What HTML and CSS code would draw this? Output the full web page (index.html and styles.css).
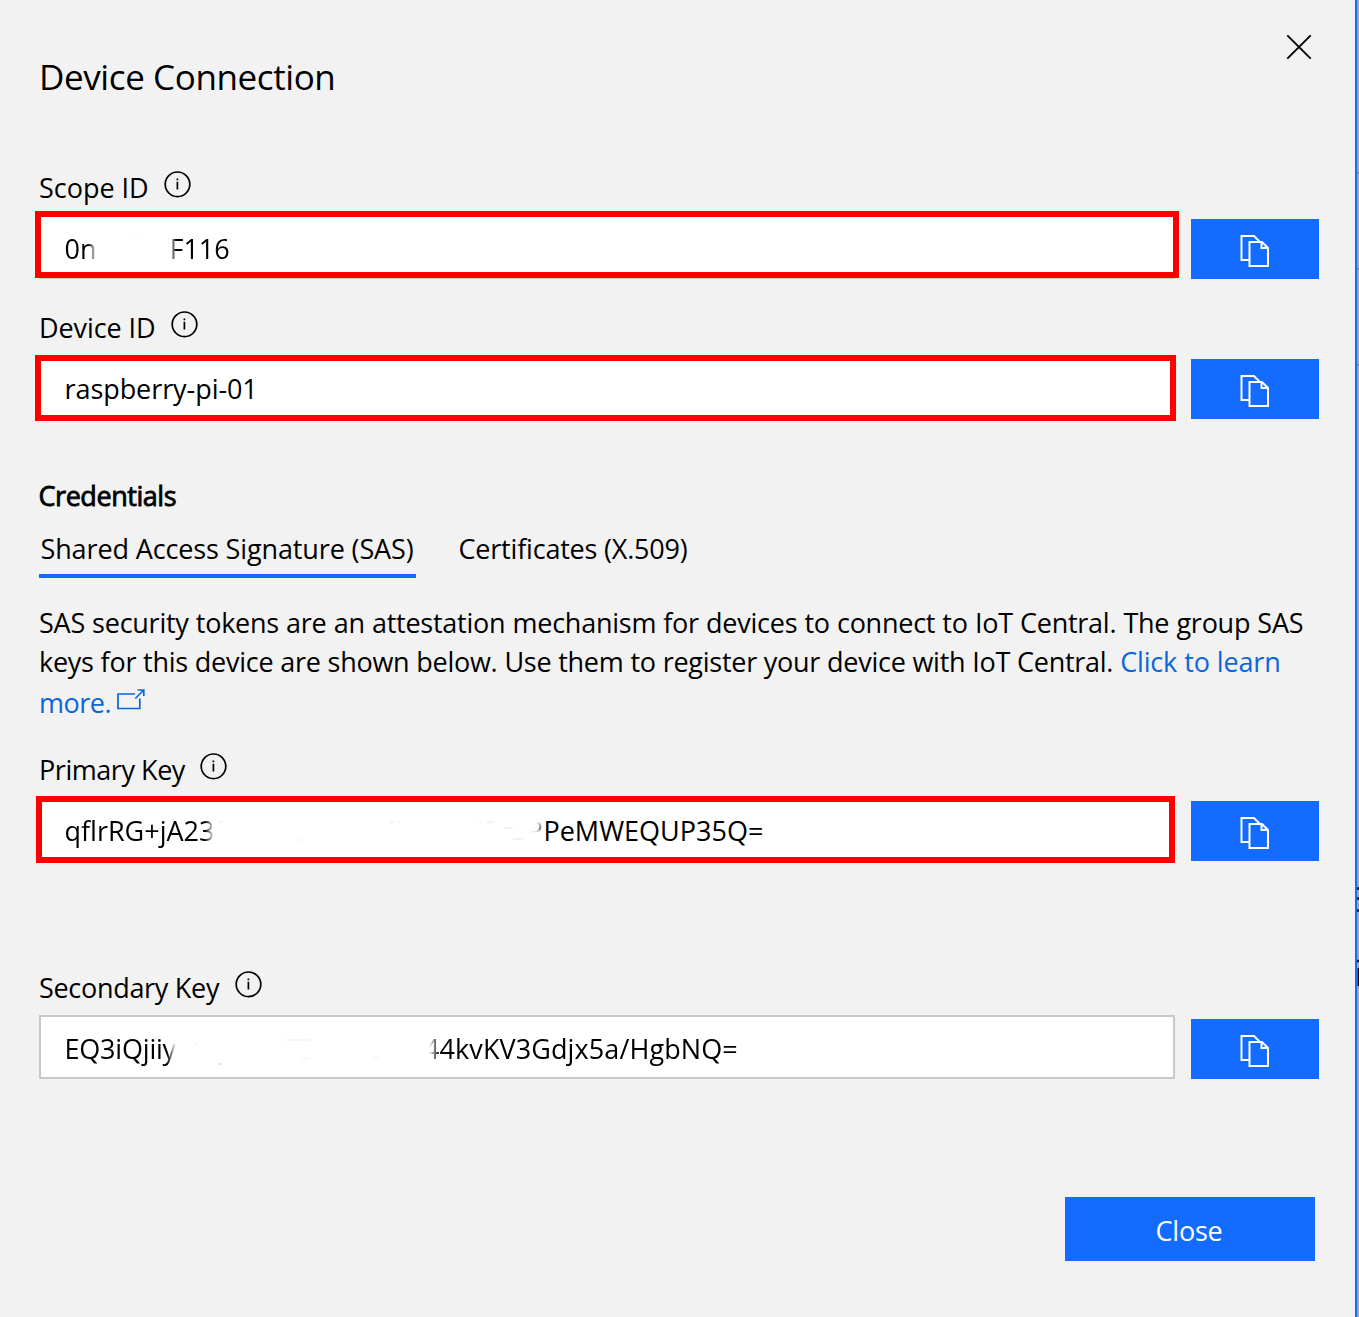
FILE: index.html
```html
<!DOCTYPE html>
<html lang="en">
<head>
<meta charset="utf-8">
<title>Device Connection</title>
<link rel="stylesheet" href="styles.css">
</head>
<body>
<svg class="symbols" aria-hidden="true">
  <symbol id="info" viewBox="0 0 27 27">
    <circle cx="13.5" cy="13.3" r="12.3" fill="none" stroke="currentColor" stroke-width="1.7"/>
    <path d="M13.4 10.8V18.6M13.4 7.4V9.2" fill="none" stroke="currentColor" stroke-width="1.7"/>
  </symbol>
  <symbol id="copy" viewBox="0 0 30 32">
    <path d="M9 25H1.5V1H14L20 7M9.5 7H22L28 13V31H9.5ZM21.5 7V13H28" fill="none" stroke="currentColor" stroke-width="2"/>
  </symbol>
</svg>
<main class="panel">
  <button class="dismiss" aria-label="Dismiss">
    <svg width="26" height="26" viewBox="0 0 26 26"><path d="M1.3 1.3L24.7 24.7M24.7 1.3L1.3 24.7" stroke="currentColor" stroke-width="1.9"/></svg>
  </button>
  <h1 class="title">Device Connection</h1>

  <section class="field">
    <div class="label"><span class="scope-label">Scope ID</span><svg class="info"><use href="#info"/></svg></div>
    <div class="row">
      <div class="input marked scope">
        <span class="fade-end">0n</span>
        <svg class="gap" width="73" height="60" viewBox="95 217 73 60"><path d="M132 239h4M166 239h3" stroke="#f3f3f3"/></svg>
        <span class="fade-start">F116</span>
      </div>
      <button class="copy" aria-label="Copy"><svg><use href="#copy"/></svg></button>
    </div>
  </section>

  <section class="field device">
    <div class="label"><span class="device-label">Device ID</span><svg class="info"><use href="#info"/></svg></div>
    <div class="row">
      <div class="input marked"><span class="device-value">raspberry-pi-01</span></div>
      <button class="copy" aria-label="Copy"><svg><use href="#copy"/></svg></button>
    </div>
  </section>

  <h2 class="heading">Credentials</h2>
  <nav class="tabs">
    <a class="tab active">Shared Access Signature (SAS)</a>
    <a class="tab">Certificates (X.509)</a>
  </nav>

  <p class="help">
    <span class="line first">SAS security tokens are an attestation mechanism for devices to connect to IoT Central. The group SAS</span>
    <span class="line second">keys for this device are shown below. Use them to register your device with IoT Central. <a class="link">Click to learn</a></span>
    <span class="line third"><a class="link">more.<svg class="external" width="28" height="21" viewBox="0 0 28 21"><path d="M18 5H1V19.5H22.8V9.5M18.3 9.5L26.3 1.5M20.5 1H26.8V7" fill="none" stroke="currentColor" stroke-width="1.7"/></svg></a></span>
  </p>

  <section class="field">
    <div class="label"><span class="primary-label">Primary Key</span><svg class="info"><use href="#info"/></svg></div>
    <div class="row">
      <div class="input marked primary">
        <span class="fade-end">qflrRG+jA23</span>
        <svg class="gap" width="312" height="60" viewBox="213 799 312 60">
          <path d="M218 822h4M389 822h3M486 822h7M503 828h9M512 839h10" stroke="#eee" stroke-width="1.5"/>
          <path d="M479 822v3M296 840h3M397 822h2" stroke="#e8e8e8" fill="none"/>
        </svg>
        <span class="remnant-p">P</span><span>PeMWEQUP35Q=</span>
      </div>
      <button class="copy" aria-label="Copy"><svg><use href="#copy"/></svg></button>
    </div>
  </section>

  <section class="field secondary">
    <div class="label"><span class="secondary-label">Secondary Key</span><svg class="info"><use href="#info"/></svg></div>
    <div class="row">
      <div class="input">
        <span class="fade-end y-end">EQ3iQjiiy</span>
        <svg class="gap" width="248" height="60" viewBox="174 1017 248 60">
          <path d="M193 1042l3 5M283 1040h24M300 1058.5h8M372 1058h4" fill="none" stroke="#f3f3f3" stroke-width="1.3"/>
          <path d="M216 1064h3" stroke="#bbb"/>
        </svg>
        <span class="fade-four">44kvKV3Gdjx5a/HgbNQ=</span>
      </div>
      <button class="copy" aria-label="Copy"><svg><use href="#copy"/></svg></button>
    </div>
  </section>

  <footer class="footer"><button class="close">Close</button></footer>
</main>
<aside class="backdrop">
  <svg width="2" height="1317" viewBox="0 0 2 1317">
    <path d="M0 173H2M0 269H2M0 365H2" stroke="#858588" stroke-width="2"/>
    <path d="M0 888.5H2M0 898.5H2M0 910.5H2M0 961H2" stroke="#111" stroke-width="2.5"/>
    <path d="M.5 968V986" stroke="#8a5a2c"/><path d="M1.5 968V986" stroke="#000"/>
  </svg>
</aside>
</body>
</html>
```

FILE: styles.css
```css
* { box-sizing: border-box; }

body {
  margin: 0;
  height: 1317px;
  display: flex;
  overflow: hidden;
  background: #f2f2f2;
  color: #000;
  font: 400 27px/40px "Open Sans", "Noto Sans", sans-serif;
}

.symbols { position: absolute; width: 0; height: 0; }

button { border: 0; padding: 0; font: inherit; color: inherit; background: none; }

.panel {
  position: relative;
  width: 1357px;
  padding: 53px 36px 0 39px;
  border-right: 2px solid #136bff;
}

.backdrop { width: 2px; background: #a6a6a8; }
.backdrop svg { display: block; }

.dismiss { position: absolute; top: 34px; right: 43.5px; width: 26px; height: 26px; }
.dismiss svg { display: block; }

.title {
  margin: 0 0 66px;
  font-size: 35px;
  font-weight: 400;
  line-height: 48px;
  letter-spacing: -0.4px;
}

.label { display: flex; height: 40px; margin: 0 0 8px; line-height: 42px; }
.info { width: 27px; height: 27px; margin: 4px 0 0 15.5px; }
.scope-label { letter-spacing: -0.03px; }
.device-label { letter-spacing: -0.1px; }
.primary-label { letter-spacing: -0.45px; }
.secondary-label { letter-spacing: -0.3px; }

.row { display: flex; align-items: flex-end; gap: 16px; }

.input {
  position: relative;
  display: flex;
  width: 1136px;
  height: 64px;
  padding-left: 23.5px;
  border: 2px solid #c8c8c8;
  background: #fff;
  line-height: 63px;
  white-space: pre;
}
.input span { display: block; flex: none; height: 60px; }
.gap { display: block; flex: none; }
.device-value { letter-spacing: -0.07px; }

/* Highlight frame drawn over the input's own border. */
.marked::after {
  content: "";
  position: absolute;
  inset: -2px -3px -4px -6px;
  border: 6px solid #f00;
}
.scope::after { inset: -6px -6px -1px -6px; }
.primary::after { inset: -3px -2px -4px -5px; }

.fade-end { mask-image: linear-gradient(to right, #000 calc(100% - 9px), transparent); }
.y-end { letter-spacing: -0.2px; }
.fade-start { mask-image: linear-gradient(to right, transparent, #000 6px); }
.remnant-p { width: 17px; mask-image: linear-gradient(125deg, transparent 45%, #000 75%), linear-gradient(#000 30px, transparent 34px); mask-composite: intersect; }
.fade-four { letter-spacing: 0.1px; mask-image: linear-gradient(to right, transparent 5px, #000 16px); }

.copy {
  display: flex;
  justify-content: center;
  width: 128px;
  height: 60px;
  padding-top: 16px;
  background: #136bff;
  color: #fff;
}
.copy svg { width: 30px; height: 32px; }

.device { margin-top: 28px; }
.secondary { margin-top: 106px; }

.heading {
  margin: 57px 0 13px -0.5px;
  font-size: 27px;
  font-weight: 400;
  line-height: 40px;
  letter-spacing: -0.45px;
  -webkit-text-stroke: 0.8px #000;
}

.tabs { display: flex; gap: 41px; height: 49px; }
.tab { padding: 0 1.5px; letter-spacing: -0.2px; }
.active { width: 377px; border-bottom: 4px solid #136bff; letter-spacing: -0.13px; }

.help { margin: 25px 0 26px; white-space: nowrap; }
.line { display: block; height: 39px; line-height: 39px; }
.first { letter-spacing: -0.25px; word-spacing: 0.4px; }
.second { letter-spacing: -0.27px; word-spacing: 0.2px; }
.second .link { letter-spacing: -0.15px; }
.third { height: 42px; line-height: 44px; letter-spacing: -0.5px; }
.link { color: #0b65db; }
.external { margin-left: 6px; vertical-align: 3px; }

.footer { display: flex; justify-content: flex-end; padding: 118px 4px 0 0; }
.close {
  width: 250px;
  height: 64px;
  padding: 3px 2px 0 0;
  background: #136bff;
  color: #fff;
  letter-spacing: -0.2px;
}
```
